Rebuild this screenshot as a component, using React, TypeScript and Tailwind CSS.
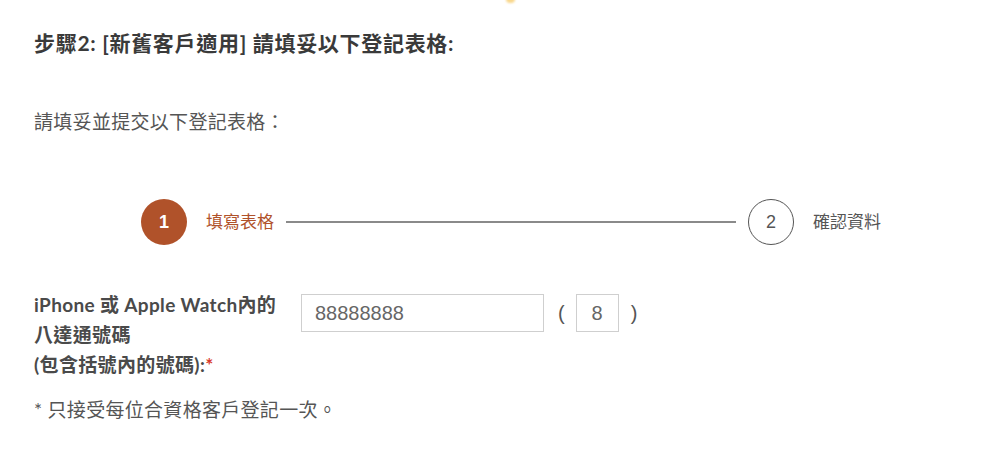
import React from 'react';

const FONT = "font-['Lato','Noto_Sans_CJK_TC',sans-serif]";

function StepCircle({ num, active }: { num: number; active?: boolean }) {
  return active ? (
    <div className="w-[46px] h-[46px] rounded-full bg-[#b0522a] flex items-center justify-center text-white text-[18px] font-semibold shrink-0 font-['Liberation_Sans',sans-serif]">
      {num}
    </div>
  ) : (
    <div className="w-[46px] h-[46px] rounded-full border-[1.5px] border-[#555] flex items-center justify-center text-[#555] text-[18px] shrink-0 font-['Liberation_Sans',sans-serif]">
      {num}
    </div>
  );
}

export default function App() {
  return (
    <div className={`relative w-[1000px] h-[449px] bg-white overflow-hidden ${FONT}`}>
      {/* glow from the section above */}
      <div className="absolute left-[506px] top-[-5px] w-[9px] h-[8px] rounded-full bg-[#f6c65a] opacity-70 blur-[1px]" />

      <div className="pl-[34px] pt-[28px]">
        {/* Header */}
        <h2 className="text-[21px] leading-[30px] font-bold tracking-[0.7px] text-[#3a3a3a]">
          步驟2: [新舊客戶適用] 請填妥以下登記表格:
        </h2>

        <p className="mt-[49px] text-[19px] leading-[30px] tracking-[0.3px] text-[#555]">請填妥並提交以下登記表格：</p>

        {/* Stepper */}
        <div className="mt-[62px] ml-[107px] w-[740px] flex items-center">
          <StepCircle num={1} active />
          <span className="ml-[19px] text-[17px] text-[#b0522a]">填寫表格</span>
          <div className="flex-1 mx-[12px] h-[2px] bg-[#8a8a8a]" />
          <StepCircle num={2} />
          <span className="ml-[19px] text-[17px] text-[#555]">確認資料</span>
        </div>

        {/* Form row */}
        <div className="mt-[45px] flex items-start">
          <label className="w-[267px] text-[19px] leading-[30px] font-bold tracking-[0.35px] text-[#4a4a4a]">
            iPhone 或 Apple Watch內的
            <br />
            八達通號碼
            <br />
            (包含括號內的號碼):<span className="text-[#d93a2b]">*</span>
          </label>
          <div className="mt-[4px] flex items-center">
            <input
              type="text"
              defaultValue="88888888"
              className="w-[243px] h-[38px] border border-[#cfcfcf] px-[13px] text-[20px] text-[#666] font-['Liberation_Sans',sans-serif] outline-none"
            />
            <span className="ml-[14px] text-[20px] text-[#555] font-['Liberation_Sans',sans-serif]">(</span>
            <input
              type="text"
              defaultValue="8"
              className="ml-[11px] w-[43px] h-[38px] border border-[#cfcfcf] text-center text-[20px] text-[#666] font-['Liberation_Sans',sans-serif] outline-none"
            />
            <span className="ml-[12px] text-[20px] text-[#555] font-['Liberation_Sans',sans-serif]">)</span>
          </div>
        </div>

        <p className="mt-[15px] text-[19px] leading-[30px] tracking-[0.3px] text-[#555]">* 只接受每位合資格客戶登記一次。</p>
      </div>
    </div>
  );
}
